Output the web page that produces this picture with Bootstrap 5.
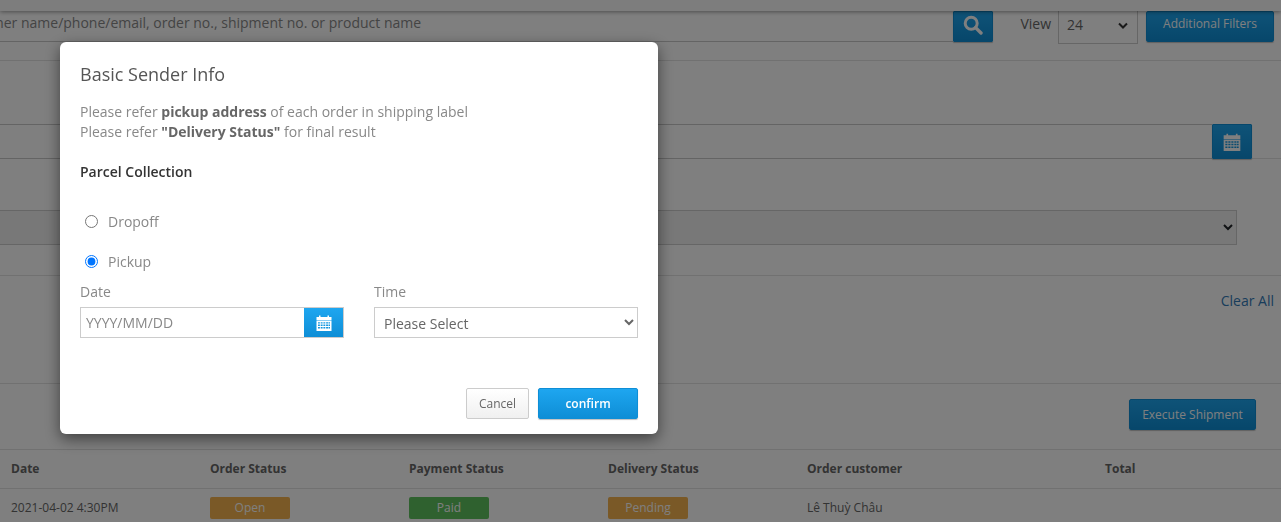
<!DOCTYPE html>
<html lang="en">
<head>
<meta charset="utf-8">
<title>Basic Sender Info</title>
<link href="https://cdn.jsdelivr.net/npm/bootstrap@5.3.0/dist/css/bootstrap.min.css" rel="stylesheet">
<style>
html,body{height:522px;overflow:hidden}
body{font-family:"Open Sans","Liberation Sans",sans-serif;font-size:14px;color:#666;background:#fff}
.form-select{appearance:auto;-webkit-appearance:auto;background-image:none}
.top-strip{height:11px;background:#fafafa;box-shadow:0 1px 4px rgba(0,0,0,.4);position:relative}
.sec{border-bottom:1px solid #e2e2e2}
.sec-search{height:50px;padding-right:7px;background:#fff}
.search-in{flex:1;height:31px;border:0;border-bottom:1px solid #c8c8c8;margin-left:-87px;padding:0 0 7px 0;font-size:14px;background:transparent;outline:0;min-width:0}
.search-in::placeholder,.date-in::placeholder{color:#888;opacity:1}
.blue-btn{background:linear-gradient(#1ea6f0,#0e8ed6);border:1px solid #0e8ed6;color:#fff;border-radius:1px;box-shadow:0 1px 1px rgba(0,0,0,.25);display:flex;align-items:center;justify-content:center;padding:0}
.btn-search{width:40px;height:31px;padding-bottom:3px}
.view-lbl{margin-left:27px;margin-right:7px;line-height:26px}
.view-sel{appearance:none;-webkit-appearance:none;width:80px;height:33px;border:1px solid #ccc;border-top:0;border-radius:0;padding:0 4px 6px 8px;color:#666;font-size:14px;margin-right:8px;background-image:url("data:image/svg+xml,%3Csvg xmlns='http://www.w3.org/2000/svg' viewBox='0 0 10 7'%3E%3Cpath d='M1 1.500l4 4 4-4' fill='none' stroke='%23333' stroke-width='2'/%3E%3C/svg%3E");background-repeat:no-repeat;background-position:right 9px top 11px;background-size:10px 7px}
.btn-filter{width:128px;height:31px;font-size:12px;border-radius:2px;padding-bottom:5px}
.sec-date{height:98px;padding:63px 29px 0 0;background:#fff}
.date-line{flex:1;height:35px;border-top:1px solid #c8c8c8;border-bottom:1px solid #c8c8c8}
.btn-cal{width:40px;height:35px}
.sec-sel{height:117px;padding:51px 44px 0 0;background:#fff}
.wide-sel{height:35px;border:1px solid #ccc;border-left:0;border-radius:0;background-color:#f0f0f0;padding:0 5px}
.sec-clear{height:108px;padding:14px 7px 0 0;background:#fff;text-align:right}
.clear-link{color:#337ab7;text-decoration:none;font-size:14px;line-height:20px}
.sec-exec{height:66px;padding:15px 25px 0 0;background:#fff}
.btn-exec{width:127px;height:31px;font-size:12px;border-radius:2px}
.order-table{table-layout:fixed;width:100%;margin:0;font-size:12px;--bs-table-bg:transparent;--bs-table-color:#666}
.order-table th,.order-table td{padding:0;vertical-align:middle;border-bottom:1px solid #e2e2e2}
.order-table th{height:38px;color:#666;font-weight:700}
.order-table td{height:40px}
.order-table th:nth-child(1),.order-table td:nth-child(1){width:210px;padding-left:11px}
.order-table th:nth-child(2),.order-table th:nth-child(3),.order-table th:nth-child(4){width:199px}
.order-table th:nth-child(5){width:298px}
.status-pill{display:block;width:80px;height:22px;line-height:22px;border-radius:2px;color:#fff;text-align:center;font-size:12px}
.pill-open{background:#f4b24f}
.pill-paid{background:#5fc35f}
.dlg{max-width:598px;width:598px;margin:42px 0 0 60px}
.dlg-box{height:392px;border:0;border-radius:6px;box-shadow:0 5px 15px rgba(0,0,0,.5);padding:0 20px 15px 20px;color:#666}
.dlg-title{font-size:18px;font-weight:400;line-height:24px;color:#555;margin:20px 0 0}
.dlg-note{margin:16px 0 0;line-height:20px;color:#888}
.dlg-note b{color:#666}
.parcel{margin:20px 0 0;font-weight:600;color:#333;line-height:20px}
.radio-row{height:20px;min-height:0;margin:0;padding:0;display:flex;align-items:center}
.radio-row .form-check-input{appearance:auto;-webkit-appearance:auto;background-image:none;border:0;margin:1px 10px 0 5px;width:13px;height:13px;float:none}
.radio-row .form-check-label{color:#888}
.drop-row{margin-top:29px}
.pick-row{margin-top:20px}
.field-row{margin-top:11px;gap:30px}
.field{width:264px}
.field-lbl{display:block;line-height:20px;margin-bottom:5px;color:#888}
.date-in{flex:1;min-width:0;height:31px;border:1px solid #ccc;border-right:0;padding:0 5px;font-size:14px;outline:0}
.btn-cal2{width:40px;height:31px;border:1px solid #ccc;border-left:0;border-radius:0;box-shadow:none}
.time-sel{height:31px;border:1px solid #ccc;border-radius:0;padding:2px 5px 0;font-size:14px;color:#666}
.dlg-foot{margin-top:auto;gap:9px}
.btn-cancel{width:63px;height:31px;font-size:12px;color:#666;background:linear-gradient(#fff,#f0f0f0);border:1px solid #ccc;border-radius:2px;padding:0}
.btn-confirm{width:100px;height:31px;font-size:12px;font-weight:600;border-radius:2px}
</style>
</head>
<body>
<div class="top-strip"></div>
<div class="sec sec-search d-flex align-items-start">
  <input class="search-in" type="text" placeholder="Order customer name/phone/email, order no., shipment no. or product name">
  <button class="blue-btn btn-search" type="button" aria-label="Search">
    <svg width="20" height="20" viewBox="0 0 20 20"><circle cx="8.200" cy="8.200" r="6" fill="none" stroke="#fff" stroke-width="3"/><path d="M12.600 12.600l5.400 5.400" stroke="#fff" stroke-width="3.400" stroke-linecap="round"/></svg>
  </button>
  <span class="view-lbl">View</span>
  <select class="form-select view-sel"><option>24</option></select>
  <button class="blue-btn btn-filter" type="button">Additional Filters</button>
</div>
<div class="sec sec-date d-flex align-items-start">
  <div class="date-line"></div>
  <button class="blue-btn btn-cal" type="button" aria-label="Calendar">
    <svg width="20" height="20" viewBox="0 0 18 18"><use href="#cal"/></svg>
  </button>
</div>
<div class="sec sec-sel">
  <select class="form-select wide-sel"><option></option></select>
</div>
<div class="sec sec-clear"><a class="clear-link" href="#">Clear All</a></div>
<div class="sec sec-exec d-flex justify-content-end align-items-start">
  <button class="blue-btn btn-exec" type="button">Execute Shipment</button>
</div>
<table class="table order-table">
  <thead><tr><th>Date</th><th>Order Status</th><th>Payment Status</th><th>Delivery Status</th><th>Order customer</th><th>Total</th></tr></thead>
  <tbody><tr><td>2021-04-02 4:30PM</td><td><span class="status-pill pill-open">Open</span></td><td><span class="status-pill pill-paid">Paid</span></td><td><span class="status-pill pill-open">Pending</span></td><td>Lê Thuỳ Châu</td><td></td></tr></tbody>
</table>

<svg width="0" height="0" class="d-none"><symbol id="cal" viewBox="0 0 18 18"><path fill="#fff" d="M1.500 3H4V1.500h1.500V3h7V1.500H14V3h2.500v3.500h-15z"/><path fill="#fff" fill-rule="evenodd" d="M1.500 7h15v10h-15zM3 8.300v1.300h1.900V8.300zM5.700 8.300v1.300h1.900V8.300zM8.400 8.300v1.300h1.900V8.300zM11.100 8.300v1.300H13V8.300zM13.500 8.300v1.300h1.500V8.300zM3 10.600v1.300h1.900v-1.300zM5.700 10.600v1.300h1.900v-1.300zM8.400 10.600v1.300h1.900v-1.300zM11.100 10.600v1.300H13v-1.300zM13.500 10.600v1.300h1.500v-1.300zM3 13v1.500h1.900V13zM5.700 13v1.500h1.900V13zM8.400 13v1.500h1.900V13zM11.100 13v1.500H13V13zM13.500 13v1.500h1.500V13z"/></symbol></svg>

<div class="modal-backdrop show"></div>
<div class="modal d-block" tabindex="-1" role="dialog">
  <div class="modal-dialog dlg">
    <div class="modal-content dlg-box">
      <h5 class="dlg-title">Basic Sender Info</h5>
      <p class="dlg-note">Please refer <b>pickup address</b> of each order in shipping label<br>Please refer <b>"Delivery Status"</b> for final result</p>
      <p class="parcel">Parcel Collection</p>
      <div class="form-check radio-row drop-row"><input class="form-check-input" type="radio" name="pc" id="r1"><label class="form-check-label" for="r1">Dropoff</label></div>
      <div class="form-check radio-row pick-row"><input class="form-check-input" type="radio" name="pc" id="r2" checked><label class="form-check-label" for="r2">Pickup</label></div>
      <div class="d-flex field-row">
        <div class="field">
          <label class="field-lbl">Date</label>
          <div class="d-flex">
            <input class="date-in" type="text" placeholder="YYYY/MM/DD">
            <button class="blue-btn btn-cal2" type="button" aria-label="Calendar"><svg width="18" height="18" viewBox="0 0 18 18"><use href="#cal"/></svg></button>
          </div>
        </div>
        <div class="field">
          <label class="field-lbl">Time</label>
          <select class="form-select time-sel"><option>Please Select</option></select>
        </div>
      </div>
      <div class="d-flex justify-content-end dlg-foot">
        <button class="btn-cancel" type="button">Cancel</button>
        <button class="blue-btn btn-confirm" type="button">confirm</button>
      </div>
    </div>
  </div>
</div>
</body>
</html>
